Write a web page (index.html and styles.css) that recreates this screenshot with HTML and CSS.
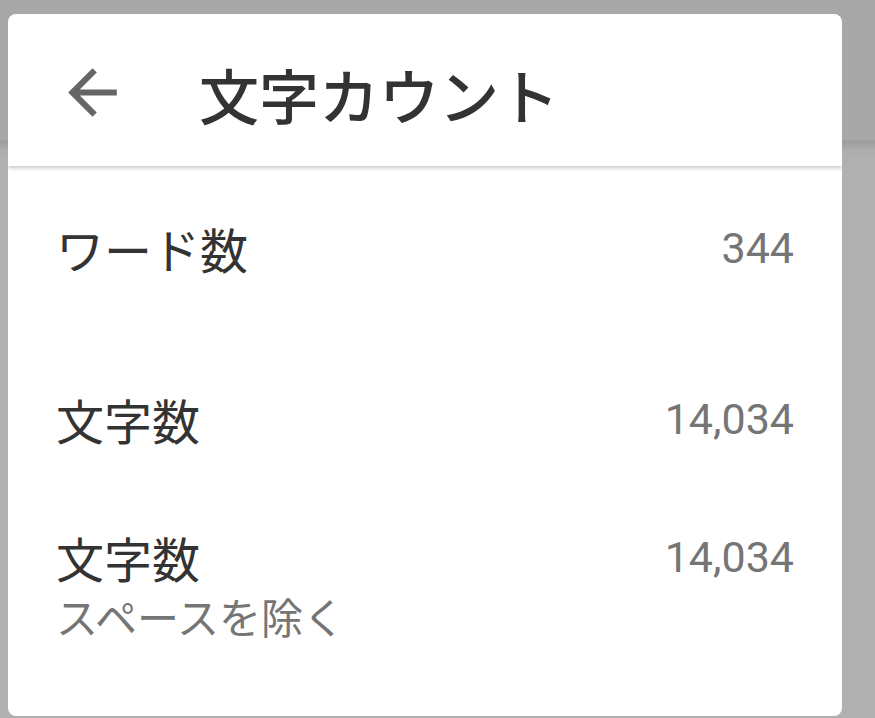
FILE: index.html
```html
<!DOCTYPE html>
<html lang="ja">
<head>
<meta charset="utf-8">
<title>文字カウント</title>
<link rel="stylesheet" href="styles.css">
</head>
<body>
<div class="dialog">
  <header class="dialog-header">
    <button class="back" aria-label="戻る">
      <svg viewBox="0 0 24 24" width="73" height="73"><path d="M20 11H7.83l5.59-5.59L12 4l-8 8 8 8 1.41-1.41L7.83 13H20v-2z" fill="#666"/></svg>
    </button>
    <h1 class="title">文字カウント</h1>
  </header>
  <ul class="stats">
    <li class="stat stat-words">
      <div class="label">ワード数</div>
      <div class="value">344</div>
    </li>
    <li class="stat stat-chars">
      <div class="label">文字数</div>
      <div class="value">14,034</div>
    </li>
    <li class="stat stat-nospace">
      <div class="label">文字数<span class="sub">スペースを除く</span></div>
      <div class="value">14,034</div>
    </li>
  </ul>
</div>
</body>
</html>
```
FILE: styles.css
```css
html, body {
  margin: 0;
  padding: 0;
  height: 100%;
}
body {
  background:
    linear-gradient(to bottom, #a8a8a8 0, #a8a8a8 140px, #9c9c9c 141px, #adadad 150px, #b0b0b0 160px, #b0b0b0 100%);
  font-family: Roboto, "Noto Sans CJK JP", sans-serif;
  padding: 14px 33px 0 8px;
  box-sizing: border-box;
  overflow: hidden;
}
.dialog {
  background: #fff;
  border-radius: 8px;
  height: 702px;
  display: flex;
  flex-direction: column;
  overflow: hidden;
}
.dialog-header {
  height: 152px;
  flex: none;
  display: flex;
  align-items: center;
  padding: 8px 0 0 48px;
  box-sizing: border-box;
  box-shadow: 0 2px 4px rgba(0,0,0,0.22);
  position: relative;
  z-index: 1;
}
.back {
  border: 0;
  background: none;
  padding: 0;
  width: 73px;
  height: 73px;
  display: block;
  margin-top: -4px;
}
.back svg { display: block; }
.title {
  margin: 0 0 0 70px;
  font-family: "Noto Sans CJK JP", sans-serif;
  font-size: 60px;
  font-weight: 500;
  line-height: 1;
  color: #333;
}
.stats {
  list-style: none;
  margin: 0;
  padding: 0 48px;
}
.stat {
  display: flex;
  justify-content: space-between;
  align-items: flex-start;
}
.label {
  font-family: "Noto Sans CJK JP", sans-serif;
  font-size: 48px;
  line-height: 60px;
  color: #333;
  display: flex;
  flex-direction: column;
}
.sub {
  font-size: 42px;
  line-height: 52px;
  margin-top: 3px;
  color: #757575;
}
.value {
  font-family: Roboto, sans-serif;
  font-size: 43px;
  line-height: 60px;
  color: #757575;
}
.stat-words { margin-top: 52px; }
.stat-chars { margin-top: 111px; }
.stat-nospace { margin-top: 78px; }
```
